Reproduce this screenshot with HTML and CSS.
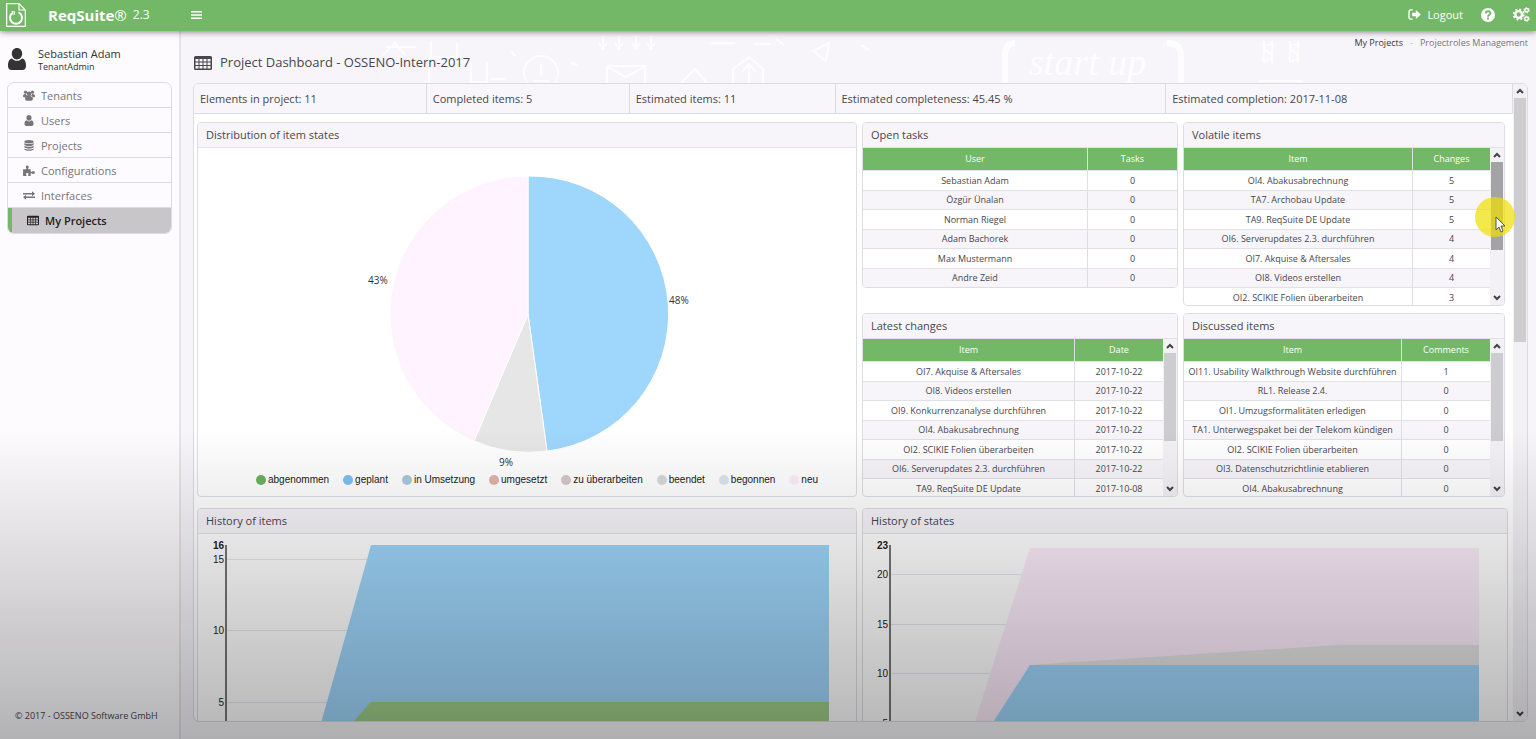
FILE: index.html
```html
<!DOCTYPE html>
<html lang="en">

<head>
    <meta charset="UTF-8">
    <meta name="viewport" content="width=device-width, initial-scale=1.0">
    <title>ReqSuite - Project Dashboard</title>
    <link rel="stylesheet" href="styles.css">
</head>

<body>
    <!-- Shared icons -->
    <svg class="sprite" aria-hidden="true">
        <symbol id="icon-table" viewBox="0 0 18 14">
            <path fill="currentColor" fill-rule="evenodd" d="M1.5 0h15A1.500 1.500 0 0 1 18 1.500v11a1.500 1.500 0 0 1-1.500 1.500h-15A1.500 1.500 0 0 1 0 12.500v-11A1.500 1.500 0 0 1 1.500 0zM1.500 3v2.500h3V3zM5.500 3v2.500h3V3zM9.500 3v2.500h3V3zM13.500 3v2.500h3V3zM1.500 6.500v2.500h3V6.500zM5.500 6.500v2.500h3V6.500zM9.500 6.500v2.500h3V6.500zM13.500 6.500v2.500h3V6.500zM1.500 10v2.500h3V10zM5.500 10v2.500h3V10zM9.500 10v2.500h3V10zM13.500 10v2.500h3V10z"/>
        </symbol>
        <symbol id="icon-user" viewBox="0 0 18 22">
            <path fill="currentColor" d="M9 0c3 0 5.200 2.400 5.200 5.600S12 11.500 9 11.500 3.800 8.800 3.800 5.600 6 0 9 0zM4 10.500c1.300 1.500 3 2.300 5 2.300s3.700-.8 5-2.300c3 .6 4 3.500 4 7.500 0 2.500-1.500 4-3.500 4h-11C1.500 22 0 20.500 0 18c0-4 1-6.900 4-7.500z"/>
        </symbol>
        <symbol id="icon-up" viewBox="0 0 8 6">
            <path fill="none" stroke="#444" stroke-width="2" d="M1 5l3-3 3 3"/>
        </symbol>
        <symbol id="icon-down" viewBox="0 0 8 6">
            <path fill="none" stroke="#444" stroke-width="2" d="M1 1l3 3 3-3"/>
        </symbol>
    </svg>

    <header class="topbar">
        <div class="brand">
            <svg class="logo" viewBox="0 0 20 24" fill="none" stroke="#fff">
                <path d="M.7.700h12.300l6.300 6.300v16.300H.7z M13 .7V7h6.300" stroke-width="1.200"/>
                <path d="M7 9.700a6 6 0 1 0 5.500-.3" stroke-width="2"/>
                <path d="M5.500 8.500l3 .5-.5 3" stroke-width="1.200"/>
            </svg>
            <span class="brand-name">ReqSuite<span class="reg">®</span></span>
            <span class="version">2.3</span>
        </div>
        <button class="icon-btn menu-toggle" aria-label="Toggle menu">
            <svg viewBox="0 0 12 10" width="11" height="10"><path d="M0 1.500h12M0 5h12M0 8.500h12" stroke="#fff" stroke-width="1.600"/></svg>
        </button>
        <div class="top-actions">
            <a href="#" class="logout">
                <svg viewBox="0 0 14 12" width="13" height="11">
                    <path d="M5 1H3a2 2 0 0 0-2 2v6a2 2 0 0 0 2 2h2" fill="none" stroke="#fff" stroke-width="1.500"/>
                    <path d="M8.500 1L14 6l-5.500 5V8H4.500V4h4z" fill="#fff"/>
                </svg>
                Logout
            </a>
            <button class="icon-btn" aria-label="Help">
                <svg viewBox="0 0 14 14" width="14" height="14">
                    <circle cx="7" cy="7" r="7" fill="#fff"/>
                    <path d="M4.800 5.500c0-3 4.600-2.900 4.600-.3C9.400 6.800 7 6.700 7 8.700M7 9.600v1.900" fill="none" stroke="#73b866" stroke-width="1.800"/>
                </svg>
            </button>
            <button class="icon-btn" aria-label="Settings">
                <svg viewBox="0 0 18 16" width="17" height="15" fill="none" stroke="#fff">
                    <circle cx="6" cy="8" r="3.600" stroke-width="2.500"/>
                    <circle cx="6" cy="8" r="5.500" stroke-width="1.800" stroke-dasharray="2.160 2.160"/>
                    <circle cx="14.500" cy="3.500" r="1.900" stroke-width="1.500"/>
                    <circle cx="14.500" cy="3.500" r="2.900" stroke-width="1" stroke-dasharray="1.500 1.530"/>
                    <circle cx="14.500" cy="12.500" r="1.900" stroke-width="1.500"/>
                    <circle cx="14.500" cy="12.500" r="2.900" stroke-width="1" stroke-dasharray="1.500 1.530"/>
                </svg>
            </button>
        </div>
    </header>

    <div class="layout">
        <aside class="sidebar">
            <div class="account">
                <svg class="avatar"><use href="#icon-user"/></svg>
                <div>
                    <div class="account-name">Sebastian Adam</div>
                    <div class="account-role">TenantAdmin</div>
                </div>
            </div>
            <nav class="menu">
                <a href="#">
                    <svg viewBox="0 0 14 12" fill="currentColor">
                        <circle cx="3" cy="2.200" r="1.900"/><circle cx="11" cy="2.200" r="1.900"/><circle cx="7" cy="4" r="2.600"/>
                        <path d="M0 7.500C0 5 1 4 3.500 4.500L5 7 3 8H1zM14 7.500C14 5 13 4 10.500 4.500L9 7l2 1h2zM2.500 10c0-2.500 1-3.800 2.700-4h3.600c1.700.2 2.700 1.500 2.700 4 0 1.300-.8 2-2 2h-5c-1.200 0-2-.7-2-2z"/>
                    </svg>
                    Tenants
                </a>
                <a href="#"><svg><use href="#icon-user"/></svg>Users</a>
                <a href="#">
                    <svg viewBox="0 0 12 13" fill="currentColor">
                        <ellipse cx="6" cy="2" rx="5.500" ry="2"/>
                        <path d="M.5 3.500c2 1.700 9 1.700 11 0v2c-1.500 2-9.500 2-11 0zM.5 6.700c2 1.700 9 1.700 11 0v2c-1.500 2-9.500 2-11 0zM.5 9.900c2 1.700 9 1.700 11 0v1.300c-1.500 2.200-9.500 2.200-11 0z"/>
                    </svg>
                    Projects
                </a>
                <a href="#">
                    <svg viewBox="0 0 14 13" fill="currentColor">
                        <path d="M0 5h3.500c.8 0 .4-1 0-1.700C2.700 1.500 3.700.500 5 .5s2.300 1 1.500 2.800c-.4.700-.8 1.700 0 1.700H9v2.500c0 .9 1 .7 1.700.300C12.500 7 14 7.700 14 9s-1.500 2-3.300 1.200C10 9.800 9 9.600 9 10.500V13H6.500c-.8 0-.5-.8-.2-1.500.6-1.300-.2-2-1.300-2s-1.900.7-1.300 2c.3.700.6 1.500-.2 1.500H0z"/>
                    </svg>
                    Configurations
                </a>
                <a href="#">
                    <svg viewBox="0 0 14 10" fill="currentColor">
                        <path d="M0 2.200h10.500V0L14 3l-3.500 3V3.800H0zM14 6.200H3.500V4L0 7l3.500 3V7.800H14z"/>
                    </svg>
                    Interfaces
                </a>
                <a href="#" class="active"><svg><use href="#icon-table"/></svg>My Projects</a>
            </nav>
            <footer class="copyright">© 2017 - OSSENO Software GmbH</footer>
        </aside>

        <main class="main">
            <!-- Chalk sketches behind the page title -->
            <svg class="doodles" viewBox="0 0 1175 52" fill="none" stroke="#fff" stroke-width="2" aria-hidden="true">
                <path d="M25 16h30M70 10v16h26v-14M50 31h58M110 31v20h16V31M68 26v26M22 24l12-12 10 12"/>
                <path d="M242 5v12m-4-5l4 6 4-6M258 5v12m-4-5l4 6 4-6M275 5v12m-4-5l4 6 4-6M290 5v12m-4-5l4 6 4-6"/>
                <circle cx="180" cy="42" r="17"/>
                <path d="M180 33v12M172 50h16M150 20l4 5M210 32l6 2M130 48h14"/>
                <path d="M246 35h38v17M246 35v17M246 36l19 10 18-10M320 52l14-14 12 14M372 52V38l16-12 14 12v14M381 41l7-8 7 8M388 33v19"/>
                <path d="M350 12h24M392 13h18M452 20l16-8-3 18zM415 8l8 6M500 14l8 5"/>
                <path d="M654 12q-10 0-10 12v28M806 12q14 0 14 12v28" stroke-width="6"/>
                <text class="chalk startup" x="668" y="44">start up</text>
                <text class="chalk" x="900" y="30">$</text>
                <text class="chalk" x="926" y="30">$</text>
                <path d="M942 50h-44M903 10v22M911 10v22M929 10v22M937 10v22"/>
            </svg>
            <div class="breadcrumb"><a href="#">My Projects</a><span>-</span>Projectroles Management</div>
            <h1><svg><use href="#icon-table"/></svg>Project Dashboard - OSSENO-Intern-2017</h1>

            <div class="dashboard">
                <div class="content">
                    <div class="stats">
                        <div>Elements in project: 11</div>
                        <div>Completed items: 5</div>
                        <div>Estimated items: 11</div>
                        <div>Estimated completeness: 45.45 %</div>
                        <div>Estimated completion: 2017-11-08</div>
                    </div>

                    <div class="panels">
                        <section class="panel">
                            <h2>Distribution of item states</h2>
                            <svg class="pie" viewBox="0 0 658 322" role="img" aria-label="Distribution of item states">
                                <g stroke="#fff" stroke-width="1">
                                    <path fill="#9fd6fb" d="M330 166V28a138 138 0 0 1 19 275z"/>
                                    <path fill="#e6e6e6" d="M330 166l19 137a138 138 0 0 1-73-10z"/>
                                    <path fill="#fef3ff" d="M330 166l-54 127A138 138 0 0 1 330 28z"/>
                                </g>
                                <text x="471" y="156">48%</text>
                                <text x="170" y="136">43%</text>
                                <text x="301" y="318">9%</text>
                            </svg>
                            <ul class="legend">
                                <li><i class="dot abgenommen"></i>abgenommen</li>
                                <li><i class="dot geplant"></i>geplant</li>
                                <li><i class="dot umsetzung"></i>in Umsetzung</li>
                                <li><i class="dot umgesetzt"></i>umgesetzt</li>
                                <li><i class="dot ueberarbeiten"></i>zu überarbeiten</li>
                                <li><i class="dot beendet"></i>beendet</li>
                                <li><i class="dot begonnen"></i>begonnen</li>
                                <li><i class="dot neu"></i>neu</li>
                            </ul>
                        </section>

                        <div class="lists">
                            <section class="panel short">
                                <h2>Open tasks</h2>
                                <table class="tasks">
                                    <thead>
                                        <tr><th>User</th><th>Tasks</th></tr>
                                    </thead>
                                    <tbody>
                                        <tr><td>Sebastian Adam</td><td>0</td></tr>
                                        <tr><td>Özgür Ünalan</td><td>0</td></tr>
                                        <tr><td>Norman Riegel</td><td>0</td></tr>
                                        <tr><td>Adam Bachorek</td><td>0</td></tr>
                                        <tr><td>Max Mustermann</td><td>0</td></tr>
                                        <tr><td>Andre Zeid</td><td>0</td></tr>
                                    </tbody>
                                </table>
                            </section>

                            <section class="panel">
                                <h2>Volatile items</h2>
                                <div class="scroll-body">
                                    <table class="volatile">
                                        <thead>
                                            <tr><th>Item</th><th>Changes</th></tr>
                                        </thead>
                                        <tbody>
                                            <tr><td>OI4. Abakusabrechnung</td><td>5</td></tr>
                                            <tr><td>TA7. Archobau Update</td><td>5</td></tr>
                                            <tr><td>TA9. ReqSuite DE Update</td><td>5</td></tr>
                                            <tr><td>OI6. Serverupdates 2.3. durchführen</td><td>4</td></tr>
                                            <tr><td>OI7. Akquise &amp; Aftersales</td><td>4</td></tr>
                                            <tr><td>OI8. Videos erstellen</td><td>4</td></tr>
                                            <tr><td>OI2. SCIKIE Folien überarbeiten</td><td>3</td></tr>
                                        </tbody>
                                    </table>
                                    <div class="scrollbar">
                                        <button aria-label="Scroll up"><svg><use href="#icon-up"/></svg></button>
                                        <div class="track"><div class="thumb pressed"></div></div>
                                        <button aria-label="Scroll down"><svg><use href="#icon-down"/></svg></button>
                                    </div>
                                </div>
                            </section>

                            <section class="panel">
                                <h2>Latest changes</h2>
                                <div class="scroll-body">
                                    <table class="latest">
                                        <thead>
                                            <tr><th>Item</th><th>Date</th></tr>
                                        </thead>
                                        <tbody>
                                            <tr><td>OI7. Akquise &amp; Aftersales</td><td>2017-10-22</td></tr>
                                            <tr><td>OI8. Videos erstellen</td><td>2017-10-22</td></tr>
                                            <tr><td>OI9. Konkurrenzanalyse durchführen</td><td>2017-10-22</td></tr>
                                            <tr><td>OI4. Abakusabrechnung</td><td>2017-10-22</td></tr>
                                            <tr><td>OI2. SCIKIE Folien überarbeiten</td><td>2017-10-22</td></tr>
                                            <tr><td>OI6. Serverupdates 2.3. durchführen</td><td>2017-10-22</td></tr>
                                            <tr><td>TA9. ReqSuite DE Update</td><td>2017-10-08</td></tr>
                                        </tbody>
                                    </table>
                                    <div class="scrollbar">
                                        <button aria-label="Scroll up"><svg><use href="#icon-up"/></svg></button>
                                        <div class="track"><div class="thumb"></div></div>
                                        <button aria-label="Scroll down"><svg><use href="#icon-down"/></svg></button>
                                    </div>
                                </div>
                            </section>

                            <section class="panel">
                                <h2>Discussed items</h2>
                                <div class="scroll-body">
                                    <table class="discussed">
                                        <thead>
                                            <tr><th>Item</th><th>Comments</th></tr>
                                        </thead>
                                        <tbody>
                                            <tr><td>OI11. Usability Walkthrough Website durchführen</td><td>1</td></tr>
                                            <tr><td>RL1. Release 2.4.</td><td>0</td></tr>
                                            <tr><td>OI1. Umzugsformalitäten erledigen</td><td>0</td></tr>
                                            <tr><td>TA1. Unterwegspaket bei der Telekom kündigen</td><td>0</td></tr>
                                            <tr><td>OI2. SCIKIE Folien überarbeiten</td><td>0</td></tr>
                                            <tr><td>OI3. Datenschutzrichtlinie etablieren</td><td>0</td></tr>
                                            <tr><td>OI4. Abakusabrechnung</td><td>0</td></tr>
                                        </tbody>
                                    </table>
                                    <div class="scrollbar">
                                        <button aria-label="Scroll up"><svg><use href="#icon-up"/></svg></button>
                                        <div class="track"><div class="thumb"></div></div>
                                        <button aria-label="Scroll down"><svg><use href="#icon-down"/></svg></button>
                                    </div>
                                </div>
                            </section>
                        </div>
                    </div>

                    <div class="panels">
                        <section class="panel">
                            <h2>History of items</h2>
                            <svg class="chart" viewBox="0 0 658 250" role="img" aria-label="History of items">
                                <path class="grid" d="M29 25.500h602M29 96.500h602M29 168.500h602"/>
                                <path fill="#9fd6fb" d="M109 239L173 11H631V239z"/>
                                <path fill="#9ecd88" d="M109 239L173 168H631V239z"/>
                                <path class="axis" d="M28 11v228"/>
                                <text class="max" x="26" y="15">16</text>
                                <text x="26" y="29">15</text>
                                <text x="26" y="100">10</text>
                                <text x="26" y="172">5</text>
                            </svg>
                        </section>
                        <section class="panel">
                            <h2>History of states</h2>
                            <svg class="chart" viewBox="0 0 644 250" role="img" aria-label="History of states">
                                <path class="grid" d="M28 40.500h588M28 90.500h588M28 139.500h588M28 189.500h588"/>
                                <path fill="#fdecfb" d="M96 238L167 14H616V238z"/>
                                <path fill="#e3e3e3" d="M167 131L475 111H616V131z"/>
                                <path fill="#9fd6fb" d="M98 238L167 131H616V238z"/>
                                <path class="axis" d="M27 11v228"/>
                                <text class="max" x="25" y="15">23</text>
                                <text x="25" y="44">20</text>
                                <text x="25" y="94">15</text>
                                <text x="25" y="143">10</text>
                                <text x="25" y="193">5</text>
                            </svg>
                        </section>
                    </div>
                </div>

                <div class="scrollbar page-scroll">
                    <button aria-label="Scroll up"><svg><use href="#icon-up"/></svg></button>
                    <div class="track"><div class="thumb"></div></div>
                    <button aria-label="Scroll down"><svg><use href="#icon-down"/></svg></button>
                </div>
            </div>

            <svg class="pointer" viewBox="0 0 40 40" aria-hidden="true">
                <circle cx="20" cy="20" r="20" fill="#f0e000" fill-opacity=".7"/>
                <path d="M21 20v13l3-3 2 5 2-1-2-5h4z" fill="#fff" stroke="#555"/>
            </svg>
        </main>
    </div>
</body>

</html>
```

FILE: styles.css
```css
* {
    box-sizing: border-box;
}

body {
    margin: 0;
    height: 100vh;
    display: flex;
    flex-direction: column;
    overflow: hidden;
    font-family: 'Segoe UI', 'Open Sans', sans-serif;
    font-size: 11px;
    color: #48464c;
    background-color: #f7f5fa;
}

/* dark fade over the lower part of the window */
body::after {
    content: "";
    position: fixed;
    inset: 58% 0 0 0;
    background: linear-gradient(rgba(0, 0, 0, 0), rgba(0, 0, 0, 0.29));
    pointer-events: none;
}

a {
    color: inherit;
    text-decoration: none;
}

button {
    padding: 0;
    border: none;
    background: none;
    cursor: pointer;
}

.sprite {
    position: absolute;
    width: 0;
    height: 0;
}

/* Top bar */
.topbar {
    display: flex;
    align-items: center;
    height: 31px;
    padding: 0 6px 2px;
    background-color: #73b866;
    color: #fff;
    box-shadow: 0 1px 6px rgba(60, 40, 60, 0.6);
    position: relative;
    z-index: 1;
}

.brand {
    display: flex;
    align-items: center;
    width: 185px;
}

.logo {
    width: 20px;
    height: 24px;
    margin-right: 22px;
}

.brand-name {
    font-size: 15px;
    font-weight: 700;
}

.reg {
    font-weight: 400;
}

.version {
    margin-left: 6px;
    font-size: 12px;
}

.icon-btn {
    display: flex;
}

.top-actions {
    display: flex;
    align-items: center;
    gap: 18px;
    margin-left: auto;
}

.logout {
    display: flex;
    align-items: center;
    gap: 6px;
}

.layout {
    display: flex;
    flex: 1;
    min-height: 0;
}

/* Sidebar */
.sidebar {
    display: flex;
    flex-direction: column;
    width: 181px;
    padding: 13px 7px 16px;
    background-color: #fdfbfe;
    border-right: 2px solid #e6e4ea;
}

.account {
    display: flex;
    align-items: center;
    gap: 12px;
    height: 30px;
    padding-left: 1px;
    color: #333;
}

.avatar {
    width: 18px;
    height: 22px;
}

.account-name {
    line-height: 15px;
    font-weight: 500;
}

.account-role {
    font-size: 9px;
    line-height: 12px;
    font-weight: 500;
}

.menu {
    margin-top: 8px;
    border: 1px solid #dddbe2;
    border-radius: 7px;
    overflow: hidden;
}

.menu a {
    display: flex;
    align-items: center;
    gap: 6px;
    height: 25px;
    padding-left: 15px;
    border-bottom: 1px solid #dddbe2;
    font-weight: 500;
    color: #77757b;
}

.menu svg {
    width: 12px;
    height: 11px;
}

.menu .active {
    border-left: 4px solid #73b866;
    border-bottom: none;
    background-color: #c8c6c9;
    font-weight: 600;
    color: #222;
}

.copyright {
    margin-top: auto;
    padding-left: 8px;
    font-size: 9px;
    line-height: 14px;
    font-weight: 500;
}

/* Main area */
.main {
    display: flex;
    flex-direction: column;
    flex: 1;
    min-width: 0;
    padding: 5px 8px 17px 12px;
    position: relative;
}

.doodles {
    position: absolute;
    top: 0;
    right: 0;
    width: 1175px;
    height: 52px;
    opacity: 0.8;
}

.chalk {
    font: italic 26px 'Liberation Serif', serif;
    fill: #fff;
    stroke: none;
}

.startup {
    font-size: 38px;
}

.breadcrumb {
    align-self: flex-end;
    font-size: 9px;
    line-height: 14px;
    color: #77757b;
    position: relative;
}

.breadcrumb a {
    color: #38363c;
}

.breadcrumb span {
    margin: 0 7px;
    color: #bbb;
}

h1 {
    display: flex;
    align-items: center;
    gap: 8px;
    margin: 2px 0 10px;
    padding-left: 1px;
    font-size: 13px;
    line-height: 21px;
    font-weight: 400;
    position: relative;
}

h1 svg {
    width: 18px;
    height: 14px;
}

.dashboard {
    display: flex;
    flex: 1;
    min-height: 0;
    border: 1px solid #dddbe2;
    border-radius: 6px;
    background-color: #fff;
    overflow: hidden;
    position: relative;
}

.content {
    flex: 1;
    min-width: 0;
    overflow: hidden;
}

.stats {
    display: grid;
    grid-template-columns: 233fr 203fr 206fr 331fr 347fr;
    margin-bottom: 8px;
    background-color: #f8f6fa;
    border-bottom: 1px solid #dddbe2;
}

.stats div {
    padding: 0 6px;
    line-height: 29px;
    border-right: 1px solid #dddbe2;
}

.panels {
    display: grid;
    grid-template-columns: 660fr 646fr;
    gap: 5px;
    margin-bottom: 11px;
    padding: 0 5px 0 3px;
}

.lists {
    display: grid;
    grid-template-columns: 316fr 322fr;
    grid-template-rows: 184px 184px;
    gap: 7px 5px;
    padding-right: 3px;
}

.panel {
    display: flex;
    flex-direction: column;
    min-width: 0;
    min-height: 0;
    border: 1px solid #dfdde4;
    border-radius: 4px;
    overflow: hidden;
}

.short {
    align-self: start;
}

h2 {
    margin: 0;
    padding: 0 8px;
    font-size: 11px;
    line-height: 24px;
    font-weight: 400;
    background-color: #f7f5f9;
    border-bottom: 1px solid #e3e1e8;
}

/* Tables */
.scroll-body {
    display: flex;
    flex: 1;
    min-height: 0;
}

table {
    width: 100%;
    flex: 1;
    align-self: flex-start;
    border-collapse: separate;
    border-spacing: 0;
    table-layout: fixed;
    font-size: 9px;
    font-weight: 500;
    text-align: center;
}

th,
td {
    padding: 0;
    line-height: 12px;
    white-space: nowrap;
}

th {
    height: 22px;
    background-color: #73b866;
    color: #fff;
    font-weight: 500;
}

td {
    height: 19px;
    border-top: 1px solid #e3e1e8;
}

tbody tr:nth-child(odd) td {
    height: 20px;
}

tbody tr:nth-child(even) {
    background-color: #f7f5fa;
}

th + th,
td + td {
    border-left: 1px solid #e0dee5;
}

.tasks th:last-child {
    width: 90px;
}

.volatile th:last-child {
    width: 78px;
}

.latest th:last-child,
.discussed th:last-child {
    width: 89px;
}

/* Scrollbars */
.scrollbar {
    display: flex;
    flex-direction: column;
    width: 14px;
    background-color: #f3f1f5;
}

.scrollbar button {
    display: flex;
    align-items: center;
    justify-content: center;
    height: 14px;
}

.scrollbar svg {
    width: 8px;
    height: 6px;
}

.track {
    flex: 1;
    padding: 0 1px;
}

.thumb {
    height: 68%;
    background-color: #cdcccf;
}

.thumb.pressed {
    background-color: #a3a2a5;
}

.page-scroll .thumb {
    height: 40%;
}

/* Charts */
.pie,
.chart {
    display: block;
    width: 100%;
}

.pie text {
    font-size: 10px;
    font-weight: 500;
    fill: #333;
}

.legend {
    display: flex;
    justify-content: center;
    gap: 14px;
    margin: 0;
    padding: 2px 0 0 20px;
    list-style: none;
    font-family: 'Liberation Sans', Arial, sans-serif;
    font-size: 10px;
    line-height: 16px;
    color: #222;
}

.legend li {
    display: flex;
    align-items: center;
    gap: 2px;
}

.dot {
    width: 10px;
    height: 10px;
    border-radius: 50%;
}

.abgenommen {
    background-color: #6bb35f;
}

.geplant {
    background-color: #7cc0f0;
}

.umsetzung {
    background-color: #b0c6de;
}

.umgesetzt {
    background-color: #e0b5aa;
}

.ueberarbeiten {
    background-color: #d5c8c6;
}

.beendet {
    background-color: #d8d8da;
}

.begonnen {
    background-color: #dde6f0;
}

.neu {
    background-color: #fceffb;
}

.chart .grid {
    stroke: #e6e6ef;
}

.axis {
    stroke: #777;
    stroke-width: 2;
}

.chart text {
    font-family: 'Liberation Sans', Arial, sans-serif;
    font-size: 10px;
    text-anchor: end;
    fill: #222;
}

.chart .max {
    font-weight: 700;
}

/* Highlighted mouse pointer */
.pointer {
    position: absolute;
    top: 166px;
    right: 21px;
    width: 40px;
    height: 40px;
}
```
